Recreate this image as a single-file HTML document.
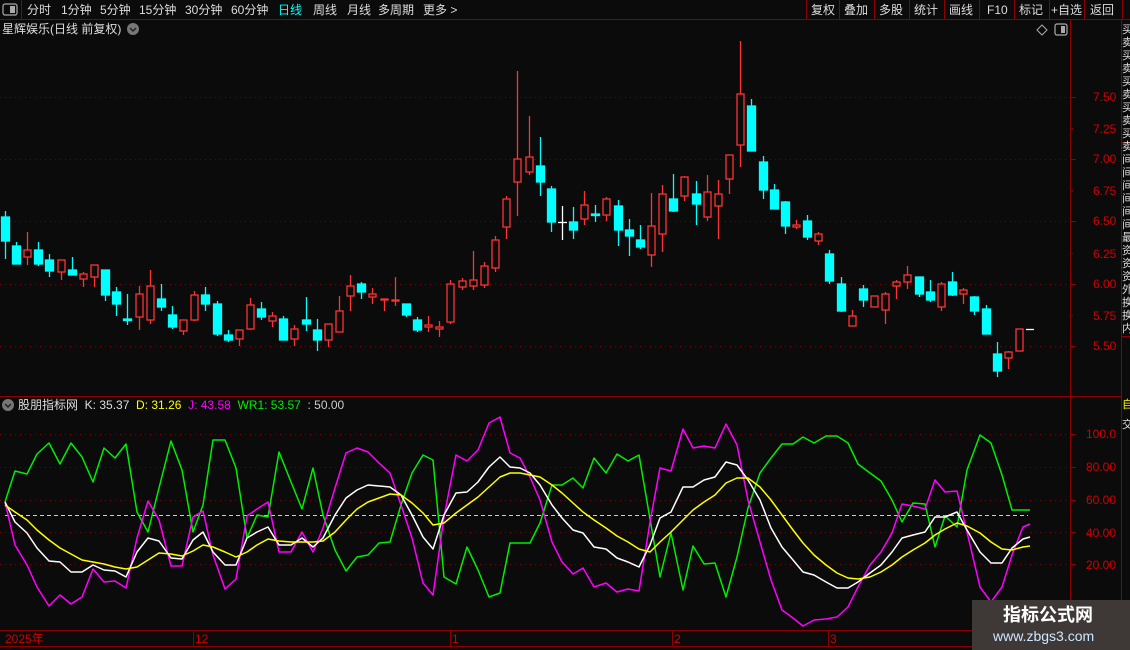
<!DOCTYPE html>
<html><head><meta charset="utf-8"><style>
*{margin:0;padding:0}
body{width:1130px;height:650px;background:#0b0b0b;overflow:hidden;position:relative;font-family:"Liberation Sans","Noto Sans CJK SC",sans-serif;color:#ddd}
.t{position:absolute;font-size:12px;white-space:nowrap;line-height:14px}
svg{position:absolute;left:0;top:0}
</style></head><body>
<svg width="1130" height="650">
<g stroke="#8c0000" stroke-width="1" fill="none">
<line x1="0" y1="19.5" x2="1130" y2="19.5"/>
<line x1="21.5" y1="0" x2="21.5" y2="19"/>
<line x1="806.5" y1="0" x2="806.5" y2="19"/><line x1="839.5" y1="0" x2="839.5" y2="19"/><line x1="874.5" y1="0" x2="874.5" y2="19"/><line x1="909.5" y1="0" x2="909.5" y2="19"/><line x1="944.5" y1="0" x2="944.5" y2="19"/><line x1="979.5" y1="0" x2="979.5" y2="19"/><line x1="1014.5" y1="0" x2="1014.5" y2="19"/><line x1="1049.5" y1="0" x2="1049.5" y2="19"/><line x1="1084.5" y1="0" x2="1084.5" y2="19"/><line x1="1122.5" y1="0" x2="1122.5" y2="19"/>
<line x1="1070.5" y1="19" x2="1070.5" y2="646"/>
<line x1="1121.5" y1="19" x2="1121.5" y2="650"/>
<line x1="0" y1="396.5" x2="1121" y2="396.5"/>
<line x1="0" y1="630.5" x2="1121" y2="630.5"/>
<line x1="0" y1="646.5" x2="1121" y2="646.5"/>
<line x1="193.5" y1="630" x2="193.5" y2="646"/><line x1="450.5" y1="630" x2="450.5" y2="646"/><line x1="672.5" y1="630" x2="672.5" y2="646"/><line x1="828.5" y1="630" x2="828.5" y2="646"/>
<line x1="1121" y1="142.5" x2="1130" y2="142.5"/><line x1="1121" y1="239.5" x2="1130" y2="239.5"/><line x1="1121" y1="336.5" x2="1130" y2="336.5"/>
</g>
<rect x="3" y="4" width="14" height="11" rx="2" fill="none" stroke="#aaa" stroke-width="1.2"/><rect x="10" y="6" width="5" height="7" fill="#aaa"/>
<rect x="1055" y="24" width="12" height="11" rx="2" fill="none" stroke="#aaa" stroke-width="1.2"/><rect x="1061" y="26" width="4" height="7" fill="#aaa"/>
<path d="M1042 25 L1047 30 L1042 35 L1037 30 Z" fill="none" stroke="#aaa" stroke-width="1"/>
<circle cx="133" cy="29" r="6" fill="#777"/><path d="M130 28 L133 31 L136 28" stroke="#222" stroke-width="1.5" fill="none"/>
<circle cx="8" cy="405" r="6" fill="#777"/><path d="M5 404 L8 407 L11 404" stroke="#222" stroke-width="1.5" fill="none"/>
<g stroke="#7a0000" stroke-width="1" stroke-dasharray="1 4">
<line x1="0" y1="97.5" x2="1068" y2="97.5"/><line x1="0" y1="159.5" x2="1068" y2="159.5"/><line x1="0" y1="221.5" x2="1068" y2="221.5"/><line x1="0" y1="284.5" x2="1068" y2="284.5"/><line x1="0" y1="346.5" x2="1068" y2="346.5"/>
<line x1="0" y1="434.5" x2="1068" y2="434.5"/><line x1="0" y1="467.5" x2="1068" y2="467.5"/><line x1="0" y1="500.5" x2="1068" y2="500.5"/><line x1="0" y1="532.5" x2="1068" y2="532.5"/><line x1="0" y1="564.5" x2="1068" y2="564.5"/>
</g>
<line x1="5" y1="515.5" x2="1028" y2="515.5" stroke="#ccc" stroke-dasharray="4 3"/>
<g stroke="#8c0000">
<line x1="1070" y1="97.5" x2="1076" y2="97.5"/><line x1="1070" y1="128.5" x2="1073" y2="128.5"/><line x1="1070" y1="159.5" x2="1076" y2="159.5"/><line x1="1070" y1="190.5" x2="1073" y2="190.5"/><line x1="1070" y1="221.5" x2="1076" y2="221.5"/><line x1="1070" y1="253.5" x2="1073" y2="253.5"/><line x1="1070" y1="284.5" x2="1076" y2="284.5"/><line x1="1070" y1="315.5" x2="1073" y2="315.5"/><line x1="1070" y1="346.5" x2="1076" y2="346.5"/>
<line x1="1070" y1="434.5" x2="1076" y2="434.5"/><line x1="1070" y1="467.5" x2="1076" y2="467.5"/><line x1="1070" y1="500.5" x2="1076" y2="500.5"/><line x1="1070" y1="532.5" x2="1076" y2="532.5"/><line x1="1070" y1="564.5" x2="1076" y2="564.5"/>
</g>
<g stroke="#00ffff" fill="#00ffff" stroke-width="1.3">
<line x1="5.5" y1="211" x2="5.5" y2="259"/><rect x="1.5" y="217" width="8" height="24"/>
<line x1="16.5" y1="242" x2="16.5" y2="264"/><rect x="12.5" y="246" width="8" height="18"/>
<line x1="38.5" y1="242" x2="38.5" y2="266"/><rect x="34.5" y="250" width="8" height="14"/>
<line x1="49.5" y1="254" x2="49.5" y2="277"/><rect x="45.5" y="260" width="8" height="11"/>
<line x1="72.5" y1="257" x2="72.5" y2="275"/><rect x="68.5" y="270" width="8" height="5"/>
<line x1="105.5" y1="270" x2="105.5" y2="301"/><rect x="101.5" y="270" width="8" height="25"/>
<line x1="116.5" y1="287" x2="116.5" y2="316"/><rect x="112.5" y="292" width="8" height="12"/>
<line x1="127.5" y1="294" x2="127.5" y2="325"/><rect x="123.5" y="319" width="8" height="1.5"/>
<line x1="161.5" y1="284" x2="161.5" y2="311"/><rect x="157.5" y="299" width="8" height="8"/>
<line x1="172.5" y1="306" x2="172.5" y2="329"/><rect x="168.5" y="315" width="8" height="12"/>
<line x1="205.5" y1="287" x2="205.5" y2="311"/><rect x="201.5" y="295" width="8" height="9"/>
<line x1="217.5" y1="301" x2="217.5" y2="336"/><rect x="213.5" y="304" width="8" height="30"/>
<line x1="228.5" y1="330" x2="228.5" y2="342"/><rect x="224.5" y="335" width="8" height="5"/>
<line x1="261.5" y1="302" x2="261.5" y2="320"/><rect x="257.5" y="309" width="8" height="8"/>
<line x1="283.5" y1="316" x2="283.5" y2="340"/><rect x="279.5" y="319" width="8" height="21"/>
<line x1="306.5" y1="297" x2="306.5" y2="331"/><rect x="302.5" y="320" width="8" height="4"/>
<line x1="317.5" y1="319" x2="317.5" y2="351"/><rect x="313.5" y="330" width="8" height="10"/>
<line x1="361.5" y1="282" x2="361.5" y2="299"/><rect x="357.5" y="284" width="8" height="8"/>
<line x1="406.5" y1="304" x2="406.5" y2="317"/><rect x="402.5" y="304" width="8" height="11"/>
<line x1="417.5" y1="317" x2="417.5" y2="332"/><rect x="413.5" y="320" width="8" height="10"/>
<line x1="540.5" y1="137" x2="540.5" y2="196"/><rect x="536.5" y="166" width="8" height="16"/>
<line x1="551.5" y1="186" x2="551.5" y2="232"/><rect x="547.5" y="189" width="8" height="33"/>
<line x1="573.5" y1="207" x2="573.5" y2="239"/><rect x="569.5" y="222" width="8" height="8"/>
<line x1="595.5" y1="205" x2="595.5" y2="222"/><rect x="591.5" y="214" width="8" height="1.5"/>
<line x1="618.5" y1="200" x2="618.5" y2="246"/><rect x="614.5" y="206" width="8" height="24"/>
<line x1="629.5" y1="219" x2="629.5" y2="256"/><rect x="625.5" y="230" width="8" height="6"/>
<line x1="640.5" y1="225" x2="640.5" y2="249"/><rect x="636.5" y="240" width="8" height="7"/>
<line x1="673.5" y1="174" x2="673.5" y2="212"/><rect x="669.5" y="199" width="8" height="12"/>
<line x1="696.5" y1="181" x2="696.5" y2="225"/><rect x="692.5" y="194" width="8" height="10"/>
<line x1="751.5" y1="99" x2="751.5" y2="151"/><rect x="747.5" y="106" width="8" height="45"/>
<line x1="763.5" y1="156" x2="763.5" y2="199"/><rect x="759.5" y="162" width="8" height="28"/>
<line x1="774.5" y1="184" x2="774.5" y2="209"/><rect x="770.5" y="190" width="8" height="19"/>
<line x1="785.5" y1="201" x2="785.5" y2="234"/><rect x="781.5" y="202" width="8" height="24"/>
<line x1="807.5" y1="215" x2="807.5" y2="240"/><rect x="803.5" y="221" width="8" height="16"/>
<line x1="829.5" y1="250" x2="829.5" y2="284"/><rect x="825.5" y="254" width="8" height="27"/>
<line x1="841.5" y1="277" x2="841.5" y2="312"/><rect x="837.5" y="284" width="8" height="27"/>
<line x1="863.5" y1="285" x2="863.5" y2="307"/><rect x="859.5" y="289" width="8" height="11"/>
<line x1="919.5" y1="277" x2="919.5" y2="297"/><rect x="915.5" y="277" width="8" height="17"/>
<line x1="930.5" y1="280" x2="930.5" y2="302"/><rect x="926.5" y="292" width="8" height="8"/>
<line x1="952.5" y1="272" x2="952.5" y2="296"/><rect x="948.5" y="282" width="8" height="13"/>
<line x1="974.5" y1="296" x2="974.5" y2="315"/><rect x="970.5" y="297" width="8" height="14"/>
<line x1="986.5" y1="305" x2="986.5" y2="334"/><rect x="982.5" y="309" width="8" height="25"/>
<line x1="997.5" y1="342" x2="997.5" y2="377"/><rect x="993.5" y="354" width="8" height="17"/>
</g>
<g stroke="#ff3333" fill="none" stroke-width="1.3">
<line x1="27.5" y1="232" x2="27.5" y2="265"/><rect x="24" y="250" width="7" height="7" fill="#0b0b0b"/>
<line x1="61.5" y1="260" x2="61.5" y2="280"/><rect x="58" y="260" width="7" height="12" fill="#0b0b0b"/>
<line x1="83.5" y1="272" x2="83.5" y2="287"/><rect x="80" y="274" width="7" height="5" fill="#0b0b0b"/>
<line x1="94.5" y1="265" x2="94.5" y2="287"/><rect x="91" y="265" width="7" height="12" fill="#0b0b0b"/>
<line x1="139.5" y1="286" x2="139.5" y2="330"/><rect x="136" y="294" width="7" height="23" fill="#0b0b0b"/>
<line x1="150.5" y1="270" x2="150.5" y2="324"/><rect x="147" y="286" width="7" height="34" fill="#0b0b0b"/>
<line x1="183.5" y1="320" x2="183.5" y2="335"/><rect x="180" y="320" width="7" height="11" fill="#0b0b0b"/>
<line x1="194.5" y1="291" x2="194.5" y2="321"/><rect x="191" y="295" width="7" height="25" fill="#0b0b0b"/>
<line x1="239.5" y1="330" x2="239.5" y2="346"/><rect x="236" y="330" width="7" height="9" fill="#0b0b0b"/>
<line x1="250.5" y1="298" x2="250.5" y2="330"/><rect x="247" y="305" width="7" height="24" fill="#0b0b0b"/>
<line x1="272.5" y1="312" x2="272.5" y2="327"/><rect x="269" y="316" width="7" height="5" fill="#0b0b0b"/>
<line x1="294.5" y1="325" x2="294.5" y2="346"/><rect x="291" y="329" width="7" height="10" fill="#0b0b0b"/>
<line x1="328.5" y1="324" x2="328.5" y2="347"/><rect x="325" y="324" width="7" height="16" fill="#0b0b0b"/>
<line x1="339.5" y1="296" x2="339.5" y2="332"/><rect x="336" y="311" width="7" height="21" fill="#0b0b0b"/>
<line x1="350.5" y1="275" x2="350.5" y2="311"/><rect x="347" y="286" width="7" height="10" fill="#0b0b0b"/>
<line x1="372.5" y1="288" x2="372.5" y2="304"/><rect x="369" y="294" width="7" height="3" fill="#0b0b0b"/>
<line x1="384.5" y1="299" x2="384.5" y2="311"/><rect x="381" y="299" width="7" height="1" fill="#0b0b0b"/>
<line x1="395.5" y1="277" x2="395.5" y2="306"/><rect x="392" y="300" width="7" height="1" fill="#0b0b0b"/>
<line x1="428.5" y1="316" x2="428.5" y2="332"/><rect x="425" y="325" width="7" height="2" fill="#0b0b0b"/>
<line x1="439.5" y1="321" x2="439.5" y2="337"/><rect x="436" y="327" width="7" height="2" fill="#0b0b0b"/>
<line x1="450.5" y1="280" x2="450.5" y2="324"/><rect x="447" y="284" width="7" height="38" fill="#0b0b0b"/>
<line x1="462.5" y1="278" x2="462.5" y2="290"/><rect x="459" y="281" width="7" height="6" fill="#0b0b0b"/>
<line x1="473.5" y1="251" x2="473.5" y2="290"/><rect x="470" y="280" width="7" height="6" fill="#0b0b0b"/>
<line x1="484.5" y1="262" x2="484.5" y2="288"/><rect x="481" y="266" width="7" height="19" fill="#0b0b0b"/>
<line x1="495.5" y1="236" x2="495.5" y2="272"/><rect x="492" y="240" width="7" height="28" fill="#0b0b0b"/>
<line x1="506.5" y1="196" x2="506.5" y2="239"/><rect x="503" y="199" width="7" height="28" fill="#0b0b0b"/>
<line x1="517.5" y1="71" x2="517.5" y2="216"/><rect x="514" y="159" width="7" height="23" fill="#0b0b0b"/>
<line x1="529.5" y1="116" x2="529.5" y2="175"/><rect x="526" y="157" width="7" height="15" fill="#0b0b0b"/>
<line x1="584.5" y1="191" x2="584.5" y2="225"/><rect x="581" y="205" width="7" height="14" fill="#0b0b0b"/>
<line x1="606.5" y1="197" x2="606.5" y2="221"/><rect x="603" y="199" width="7" height="16" fill="#0b0b0b"/>
<line x1="651.5" y1="193" x2="651.5" y2="267"/><rect x="648" y="226" width="7" height="29" fill="#0b0b0b"/>
<line x1="662.5" y1="185" x2="662.5" y2="252"/><rect x="659" y="194" width="7" height="40" fill="#0b0b0b"/>
<line x1="684.5" y1="176" x2="684.5" y2="201"/><rect x="681" y="177" width="7" height="19" fill="#0b0b0b"/>
<line x1="707.5" y1="175" x2="707.5" y2="221"/><rect x="704" y="192" width="7" height="25" fill="#0b0b0b"/>
<line x1="718.5" y1="180" x2="718.5" y2="239"/><rect x="715" y="194" width="7" height="12" fill="#0b0b0b"/>
<line x1="729.5" y1="155" x2="729.5" y2="194"/><rect x="726" y="155" width="7" height="24" fill="#0b0b0b"/>
<line x1="740.5" y1="41" x2="740.5" y2="167"/><rect x="737" y="94" width="7" height="51" fill="#0b0b0b"/>
<line x1="796.5" y1="220" x2="796.5" y2="229"/><rect x="793" y="225" width="7" height="2" fill="#0b0b0b"/>
<line x1="818.5" y1="232" x2="818.5" y2="245"/><rect x="815" y="234" width="7" height="7" fill="#0b0b0b"/>
<line x1="852.5" y1="310" x2="852.5" y2="326"/><rect x="849" y="316" width="7" height="10" fill="#0b0b0b"/>
<rect x="871" y="296" width="7" height="11" fill="#0b0b0b"/>
<line x1="885.5" y1="292" x2="885.5" y2="324"/><rect x="882" y="294" width="7" height="16" fill="#0b0b0b"/>
<line x1="896.5" y1="280" x2="896.5" y2="299"/><rect x="893" y="282" width="7" height="4" fill="#0b0b0b"/>
<line x1="907.5" y1="266" x2="907.5" y2="289"/><rect x="904" y="275" width="7" height="7" fill="#0b0b0b"/>
<line x1="941.5" y1="282" x2="941.5" y2="311"/><rect x="938" y="284" width="7" height="23" fill="#0b0b0b"/>
<line x1="963.5" y1="288" x2="963.5" y2="304"/><rect x="960" y="290" width="7" height="4" fill="#0b0b0b"/>
<line x1="1008.5" y1="351" x2="1008.5" y2="369"/><rect x="1005" y="352" width="7" height="6" fill="#0b0b0b"/>
<rect x="1016" y="329" width="7" height="22" fill="#0b0b0b"/>
</g>
<line x1="562.5" y1="206" x2="562.5" y2="240" stroke="#fff" stroke-width="1.3"/><line x1="558" y1="222.5" x2="567" y2="222.5" stroke="#fff" stroke-width="1.3"/>
<line x1="1026" y1="329.5" x2="1034" y2="329.5" stroke="#fff" stroke-width="1.3"/>
<g fill="none" stroke-width="1.5" stroke-linejoin="round">
<polyline stroke="#00ee00" points="5,502 15,471 27,474 37,454 49,443 60,464 71,443 82,457 93,482 104,448 115,458 126,444 137,512 148,532 159,488 171,441 182,470 193,532 203,505 213,440 225,440 236,468 247,538 257,515 268,517 279,452 291,482 302,509 313,468 323,515 335,550 346,571 357,557 368,555 379,543 390,542 401,505 412,473 423,455 433,460 444,577 456,584 467,547 478,570 489,597 500,593 510,543 522,543 530,543 540,523 552,485 562,485 573,478 583,488 594,458 606,473 617,454 628,461 639,455 660,577 671,533 683,590 693,546 704,564 715,563 726,597 737,557 748,508 760,473 771,458 782,444 793,444 803,437 814,443 826,436 837,436 848,443 858,464 870,473 881,481 892,500 902,522 913,503 925,504 935,547 945,516 957,527 967,470 980,435 991,443 1002,475 1012,510 1023,510 1030,510"/>
<polyline stroke="#ff00ff" points="5,502 15,545 27,565 37,587 49,606 60,595 71,604 82,597 93,569 104,582 115,581 126,588 137,538 148,501 159,520 171,566 182,566 193,517 203,511 213,555 225,589 236,579 247,516 257,509 268,502 279,552 291,552 302,532 313,552 323,528 335,488 346,453 357,448 368,452 379,463 390,473 401,505 412,538 423,583 433,595 444,517 456,455 467,461 478,450 489,423 500,417 510,453 520,458 530,477 540,500 552,542 562,562 573,574 583,568 594,587 606,583 617,592 628,589 639,591 650,522 660,468 671,471 683,429 693,448 704,446 715,448 726,424 737,445 748,500 760,542 771,580 782,610 793,618 803,626 814,620 826,619 837,617 848,607 858,587 870,565 881,552 892,533 902,504 913,506 925,509 935,480 945,492 957,491 967,532 980,587 991,602 1002,587 1012,555 1023,527 1030,524"/>
<polyline stroke="#ffffff" points="5,502 15,522 27,533 37,548 49,561 60,562 71,572 82,572 93,565 104,570 115,571 126,577 137,552 148,538 159,541 171,558 182,559 193,540 203,532 213,552 225,565 236,565 247,538 257,532 268,527 279,545 291,545 302,538 313,547 323,538 335,515 346,498 357,490 368,485 379,486 390,487 401,495 412,515 423,537 433,549 444,515 456,493 467,492 478,482 489,467 500,457 510,467 520,468 530,473 540,485 552,505 562,518 573,530 583,533 594,547 606,549 617,558 628,562 639,567 650,545 660,518 671,512 683,487 693,487 704,480 715,477 726,462 737,465 748,480 760,500 771,528 782,547 793,560 803,572 814,575 826,582 837,588 848,588 858,582 870,573 881,565 892,552 902,538 913,535 925,532 935,517 945,517 957,512 967,530 980,552 991,563 1002,563 1012,548 1023,539 1030,537"/>
<polyline stroke="#ffff00" points="5,505 15,512 27,520 37,530 49,540 60,548 71,554 82,560 93,562 104,564 115,567 126,569 137,567 148,560 159,553 171,554 182,556 193,551 203,545 213,547 225,552 236,557 247,552 257,545 268,539 279,541 291,542 302,542 313,542 323,541 335,532 346,520 357,509 368,502 379,498 390,494 401,495 412,503 423,513 433,525 444,523 456,513 467,505 478,497 489,487 500,477 510,473 520,473 530,475 540,477 552,485 562,493 573,503 583,512 594,520 606,528 617,536 628,542 639,549 650,552 660,542 671,532 683,520 693,510 704,502 715,495 726,483 737,478 748,478 760,487 771,500 782,515 793,530 803,543 814,555 826,565 837,573 848,578 858,579 870,577 881,572 892,565 902,557 913,550 925,543 935,535 945,529 957,523 967,526 980,533 991,542 1002,549 1012,550 1023,547 1030,546"/>
</g>
</svg>
<div class="t" style="left:27px;top:3px">分时</div>
<div class="t" style="left:61px;top:3px">1分钟</div>
<div class="t" style="left:100px;top:3px">5分钟</div>
<div class="t" style="left:139px;top:3px">15分钟</div>
<div class="t" style="left:185px;top:3px">30分钟</div>
<div class="t" style="left:231px;top:3px">60分钟</div>
<div class="t" style="left:278px;top:3px;color:#00ffff">日线</div>
<div class="t" style="left:313px;top:3px">周线</div>
<div class="t" style="left:347px;top:3px">月线</div>
<div class="t" style="left:378px;top:3px">多周期</div>
<div class="t" style="left:423px;top:3px">更多 &gt;</div>
<div class="t" style="left:811px;top:3px">复权</div>
<div class="t" style="left:844px;top:3px">叠加</div>
<div class="t" style="left:879px;top:3px">多股</div>
<div class="t" style="left:914px;top:3px">统计</div>
<div class="t" style="left:949px;top:3px">画线</div>
<div class="t" style="left:987px;top:3px">F10</div>
<div class="t" style="left:1019px;top:3px">标记</div>
<div class="t" style="left:1051px;top:3px">+自选</div>
<div class="t" style="left:1090px;top:3px">返回</div>
<div class="t" style="left:2px;top:22px">星辉娱乐(日线 前复权)</div>
<div class="t" style="left:1093px;top:90px;color:#d00000">7.50</div>
<div class="t" style="left:1093px;top:122px;color:#d00000">7.25</div>
<div class="t" style="left:1093px;top:152px;color:#d00000">7.00</div>
<div class="t" style="left:1093px;top:184px;color:#d00000">6.75</div>
<div class="t" style="left:1093px;top:214px;color:#d00000">6.50</div>
<div class="t" style="left:1093px;top:247px;color:#d00000">6.25</div>
<div class="t" style="left:1093px;top:277px;color:#d00000">6.00</div>
<div class="t" style="left:1093px;top:309px;color:#d00000">5.75</div>
<div class="t" style="left:1093px;top:339px;color:#d00000">5.50</div>
<div class="t" style="left:1086px;top:427px;color:#d00000">100.0</div>
<div class="t" style="left:1086px;top:460px;color:#d00000">80.00</div>
<div class="t" style="left:1086px;top:493px;color:#d00000">60.00</div>
<div class="t" style="left:1086px;top:526px;color:#d00000">40.00</div>
<div class="t" style="left:1086px;top:558px;color:#d00000">20.00</div>
<div class="t" style="left:1122px;top:24px;width:9px;overflow:hidden;line-height:13px;white-space:normal;font-size:11px">买卖买卖买卖买卖买卖间间间间间间最资资资外换换内</div>
<div class="t" style="left:1122px;top:398px;width:9px;overflow:hidden;color:#ffff00;font-size:11px">自</div>
<div class="t" style="left:1122px;top:418px;width:9px;overflow:hidden;font-size:11px">交</div>
<div class="t" style="left:18px;top:398px">股朋指标网 &nbsp;K: 35.37 &nbsp;<span style="color:#ffff00">D: 31.26</span> &nbsp;<span style="color:#ff00ff">J: 43.58</span> &nbsp;<span style="color:#00ee00">WR1: 53.57</span> &nbsp;<span style="color:#ccc">: 50.00</span></div>
<div class="t" style="left:5px;top:632px;color:#d00000">2025年</div>
<div class="t" style="left:195px;top:632px;color:#d00000">12</div>
<div class="t" style="left:452px;top:632px;color:#d00000">1</div>
<div class="t" style="left:674px;top:632px;color:#d00000">2</div>
<div class="t" style="left:830px;top:632px;color:#d00000">3</div>
<div style="position:absolute;left:972px;top:600px;width:158px;height:50px;background:#3e3837"></div>
<div class="t" style="left:1003px;top:604px;font-size:18px;line-height:22px;font-weight:bold;color:#fff">指标公式网</div>
<div class="t" style="left:993px;top:627px;font-size:14px;line-height:18px;color:#cde8ff">www.zbgs3.com</div>
</body></html>
